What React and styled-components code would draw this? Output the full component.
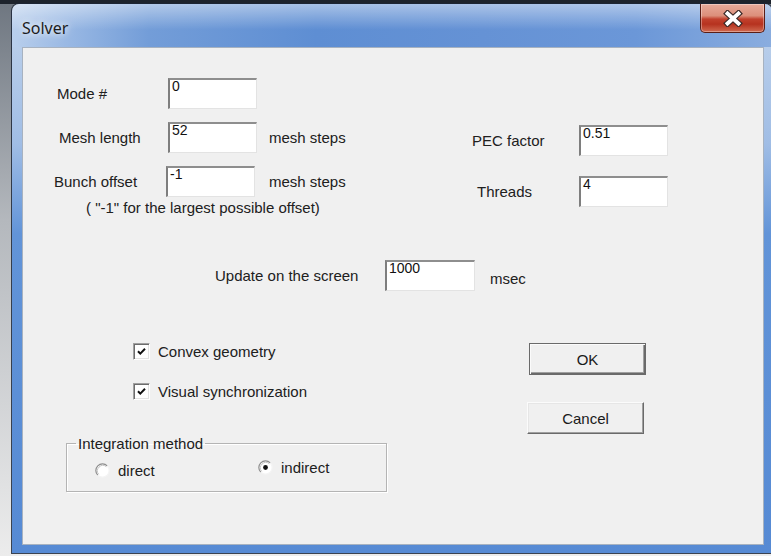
import React from "react";
import styled, { createGlobalStyle, css } from "styled-components";

const GlobalStyle = createGlobalStyle`
  html, body {
    margin: 0;
    padding: 0;
  }
  body {
    width: 771px;
    height: 556px;
    overflow: hidden;
    background: linear-gradient(180deg, #1d232c 0, #1d232c 4px, #6f7781 4px, #b4b8bd 220px, #ececec 556px);
    font-family: "Liberation Sans", Arial, sans-serif;
  }
`;

const Desktop = styled.div`
  padding: 4px 0 0 12px;
`;

const Window = styled.div`
  box-sizing: border-box;
  width: 760px;
  height: 549px;
  padding: 0 8px 8px 10px;
  display: flex;
  flex-direction: column;
  border-radius: 7px 7px 0 0;
  box-shadow: 0 0 0 1px rgba(28, 38, 54, 0.85);
  background:
    linear-gradient(180deg, rgba(255, 255, 255, 0.45), rgba(255, 255, 255, 0) 60%) top / 100% 43px no-repeat,
    linear-gradient(90deg, #b9cfec 0%, #9ab9e4 7%, #739dd8 18%, #5e8ed3 40%, #6592d5 62%, #6b97d8 82%, #8aaddf 100%) top / 100% 43px no-repeat,
    linear-gradient(180deg, #b7cdea 43px, #a0bde5 140px, #6294d8 230px, #568ad4 100%);
`;

const TitleBar = styled.div`
  flex-shrink: 0;
  height: 43px;
  display: flex;
  justify-content: space-between;
  align-items: flex-start;
`;

const TitleText = styled.div`
  margin-top: 14px;
  font-family: "Noto Sans", "Open Sans", sans-serif;
  font-size: 16px;
  line-height: 20px;
  color: #1c1c1c;
  text-shadow: 0 0 6px rgba(255, 255, 255, 0.95), 0 0 12px rgba(255, 255, 255, 0.7);
`;

const CloseButton = styled.div`
  box-sizing: border-box;
  width: 65px;
  height: 29px;
  margin-right: -1px;
  display: flex;
  align-items: center;
  justify-content: center;
  border: 1px solid #5a1e16;
  border-top: none;
  border-radius: 0 0 5px 5px;
  background: linear-gradient(180deg, #e8ab9b 0%, #dc8f7a 42%, #c2412d 54%, #b6321f 72%, #d06a51 100%);
  box-shadow: inset 0 0 0 1px rgba(255, 255, 255, 0.35);
`;

const Client = styled.div`
  flex: 1;
  box-sizing: border-box;
  display: flex;
  flex-direction: column;
  padding-top: 30px;
  background: #f0f0f0;
  border: 1px solid #a7b2c0;
  color: #202020;
  font-size: 15px;
`;

const TopSection = styled.div`
  display: flex;
  align-items: flex-start;
`;

const FieldColumn = styled.div`
  display: flex;
  flex-direction: column;
  gap: ${(p) => p.$gap}px;
  width: ${(p) => (p.$width ? `${p.$width}px` : "auto")};
  margin-top: ${(p) => p.$top || 0}px;
`;

const FieldRow = styled.div`
  display: flex;
  align-items: center;
  height: 31px;
  margin-top: ${(p) => p.$top || 0}px;
`;

const FieldLabel = styled.span`
  box-sizing: border-box;
  width: ${(p) => p.$w}px;
  padding-left: ${(p) => p.$indent}px;
  white-space: nowrap;
  line-height: 17px;
`;

const ValueBox = styled.div`
  box-sizing: border-box;
  width: ${(p) => p.$w || 89}px;
  height: 31px;
  padding: 0 2px;
  background: #ffffff;
  border-style: solid;
  border-width: 2px 1px 1px 2px;
  border-color: #8e8e8e #e3e3e3 #e3e3e3 #7e7e7e;
  font-size: 14px;
  line-height: 12px;
  color: #111;
`;

const Unit = styled.span`
  margin-left: ${(p) => p.$gap}px;
  padding-top: ${(p) => p.$drop || 0}px;
  line-height: 17px;
`;

const Hint = styled.div`
  margin-top: 2px;
  padding-left: 63px;
  line-height: 17px;
`;

const BottomSection = styled.div`
  display: flex;
  align-items: flex-start;
  margin-top: 52px;
`;

const OptionsColumn = styled.div`
  width: 506px;
  display: flex;
  flex-direction: column;
`;

const CheckList = styled.div`
  display: flex;
  flex-direction: column;
  gap: 23px;
  padding-left: 110px;
`;

const CheckRow = styled.label`
  display: flex;
  align-items: center;
  gap: 8px;
  height: 17px;
  line-height: 17px;
`;

const CheckBox = styled.span`
  box-sizing: border-box;
  width: 17px;
  height: 17px;
  display: flex;
  align-items: center;
  justify-content: center;
  background: #ffffff;
  border: 1px solid;
  border-color: #a0a0a0 #ffffff #ffffff #a0a0a0;
  box-shadow: inset 1px 1px #6c6c6c, inset -1px -1px #e3e3e3;
`;

const GroupBox = styled.fieldset`
  box-sizing: border-box;
  width: 321px;
  height: 57px;
  margin: 35px 0 0 43px;
  padding: 0;
  border: 1px solid #b4b4b4;
  box-shadow: inset 1px 1px #ffffff, 1px 1px #ffffff;
`;

const GroupLegend = styled.legend`
  margin-left: 9px;
  padding: 0 2px;
  line-height: 17px;
`;

const RadioRow = styled.div`
  display: flex;
  align-items: flex-start;
  padding-left: 28px;
`;

const RadioOption = styled.label`
  display: flex;
  align-items: center;
  gap: 8px;
  width: ${(p) => (p.$w ? `${p.$w}px` : "auto")};
  margin-top: ${(p) => p.$top}px;
  line-height: 17px;
`;

const ButtonColumn = styled.div`
  display: flex;
  flex-direction: column;
  align-items: flex-start;
  gap: 27px;
`;

const PushButton = styled.button`
  box-sizing: border-box;
  width: 117px;
  height: 32px;
  margin: 0 0 0 ${(p) => p.$shift || 0}px;
  padding: 0;
  font-family: "Liberation Sans", Arial, sans-serif;
  font-size: 15px;
  color: #1a1a1a;
  background: #f0f0f0;
  border: 1px solid;
  border-color: #fbfbfb #6a6a6a #6a6a6a #fbfbfb;
  box-shadow: inset -1px -1px #a0a0a0, inset 1px 1px #e6e6e6;
  ${(p) =>
    p.$default &&
    css`
      border-color: #6a6a6a;
      box-shadow: inset 1px 1px #fbfbfb, inset -1px -1px #6a6a6a, inset -2px -2px #a0a0a0;
    `}
`;

const CloseGlyph = () => (
  <svg width="20" height="17" viewBox="0 0 20 17">
    <g strokeLinecap="square">
      <path d="M4.5 3.5 L15.5 13.5 M15.5 3.5 L4.5 13.5" stroke="#3b2a28" strokeWidth="6.2" />
      <path d="M4.5 3.5 L15.5 13.5 M15.5 3.5 L4.5 13.5" stroke="#ffffff" strokeWidth="3.8" />
    </g>
  </svg>
);

const CheckMark = () => (
  <svg width="13" height="13" viewBox="0 0 13 13">
    <path d="M3 6.2 L5.3 8.6 L10 3.8" fill="none" stroke="#111" strokeWidth="2" />
  </svg>
);

const RadioMark = ({ on }) => (
  <svg width="15" height="15" viewBox="0 0 15 15">
    <circle cx="7.5" cy="7.5" r="6.6" fill="#ffffff" />
    <path d="M2.8 12.2 A6.6 6.6 0 0 1 12.2 2.8" fill="none" stroke="#8c8c8c" strokeWidth="1.2" />
    <path d="M3.7 11.3 A5.4 5.4 0 0 1 11.3 3.7" fill="none" stroke="#c4c4c4" strokeWidth="1" />
    <path d="M12.2 2.8 A6.6 6.6 0 0 1 2.8 12.2" fill="none" stroke="#f4f4f4" strokeWidth="1.2" />
    {on && <circle cx="7.5" cy="7.5" r="2.4" fill="#111" />}
  </svg>
);

export default function App() {
  return (
    <>
      <GlobalStyle />
      <Desktop>
        <Window>
          <TitleBar>
            <TitleText>Solver</TitleText>
            <CloseButton>
              <CloseGlyph />
            </CloseButton>
          </TitleBar>
          <Client>
            <TopSection>
              <FieldColumn $gap={13} $width={449}>
                <FieldRow>
                  <FieldLabel $w={145} $indent={34}>Mode #</FieldLabel>
                  <ValueBox>0</ValueBox>
                </FieldRow>
                <FieldRow>
                  <FieldLabel $w={145} $indent={36}>Mesh length</FieldLabel>
                  <ValueBox>52</ValueBox>
                  <Unit $gap={12}>mesh steps</Unit>
                </FieldRow>
                <div>
                  <FieldRow>
                    <FieldLabel $w={143} $indent={31}>Bunch offset</FieldLabel>
                    <ValueBox>-1</ValueBox>
                    <Unit $gap={14}>mesh steps</Unit>
                  </FieldRow>
                  <Hint>( "-1" for the largest possible offset)</Hint>
                </div>
              </FieldColumn>
              <FieldColumn $gap={20} $top={47}>
                <FieldRow>
                  <FieldLabel $w={107} $indent={0}>PEC factor</FieldLabel>
                  <ValueBox>0.51</ValueBox>
                </FieldRow>
                <FieldRow>
                  <FieldLabel $w={107} $indent={5}>Threads</FieldLabel>
                  <ValueBox>4</ValueBox>
                </FieldRow>
              </FieldColumn>
            </TopSection>

            <FieldRow $top={44}>
              <FieldLabel $w={362} $indent={192}>Update on the screen</FieldLabel>
              <ValueBox $w={90}>1000</ValueBox>
              <Unit $gap={15} $drop={5}>msec</Unit>
            </FieldRow>

            <BottomSection>
              <OptionsColumn>
                <CheckList>
                  <CheckRow>
                    <CheckBox>
                      <CheckMark />
                    </CheckBox>
                    Convex geometry
                  </CheckRow>
                  <CheckRow>
                    <CheckBox>
                      <CheckMark />
                    </CheckBox>
                    Visual synchronization
                  </CheckRow>
                </CheckList>
                <GroupBox>
                  <GroupLegend>Integration method</GroupLegend>
                  <RadioRow>
                    <RadioOption $w={163} $top={10}>
                      <RadioMark />
                      direct
                    </RadioOption>
                    <RadioOption $top={7}>
                      <RadioMark on />
                      indirect
                    </RadioOption>
                  </RadioRow>
                </GroupBox>
              </OptionsColumn>
              <ButtonColumn>
                <PushButton $default>OK</PushButton>
                <PushButton $shift={-2}>Cancel</PushButton>
              </ButtonColumn>
            </BottomSection>
          </Client>
        </Window>
      </Desktop>
    </>
  );
}
